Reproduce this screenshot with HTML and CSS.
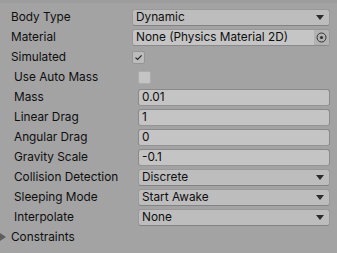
FILE: index.html
```html
<!DOCTYPE html>
<html>
<head>
<meta charset="utf-8">
<link rel="stylesheet" href="styles.css">
</head>
<body>
<div class="inspector">
  <div class="header-strip"></div>
  <div class="rows">
    <div class="row">
      <div class="label">Body Type</div>
      <div class="field dropdown"><span class="value">Dynamic</span><span class="arrow"></span></div>
    </div>
    <div class="row">
      <div class="label">Material</div>
      <div class="field object"><span class="value">None (Physics Material 2D)</span><span class="picker"><svg width="11" height="11" viewBox="0 0 11 11"><circle cx="5.5" cy="5.5" r="4.5" fill="none" stroke="#333" stroke-width="1"/><circle cx="5.5" cy="5.5" r="1.6" fill="#333"/></svg></span></div>
    </div>
    <div class="row">
      <div class="label">Simulated</div>
      <div class="checkwrap"><span class="checkbox"><svg width="11" height="11" viewBox="0 0 11 11"><path d="M2.5 5.6 L4.6 7.4 L8.6 3.4" fill="none" stroke="#222" stroke-width="1.2"/></svg></span></div>
    </div>
    <div class="row indent">
      <div class="label">Use Auto Mass</div>
      <div class="checkwrap"><span class="checkbox disabled"></span></div>
    </div>
    <div class="row indent">
      <div class="label">Mass</div>
      <div class="field text"><span class="value">0.01</span></div>
    </div>
    <div class="row indent">
      <div class="label">Linear Drag</div>
      <div class="field text"><span class="value">1</span></div>
    </div>
    <div class="row indent">
      <div class="label">Angular Drag</div>
      <div class="field text"><span class="value">0</span></div>
    </div>
    <div class="row indent">
      <div class="label">Gravity Scale</div>
      <div class="field text"><span class="value">-0.1</span></div>
    </div>
    <div class="row indent">
      <div class="label">Collision Detection</div>
      <div class="field dropdown"><span class="value">Discrete</span><span class="arrow"></span></div>
    </div>
    <div class="row indent">
      <div class="label">Sleeping Mode</div>
      <div class="field dropdown"><span class="value">Start Awake</span><span class="arrow"></span></div>
    </div>
    <div class="row indent">
      <div class="label">Interpolate</div>
      <div class="field dropdown"><span class="value">None</span><span class="arrow"></span></div>
    </div>
    <div class="row foldout">
      <span class="fold-arrow"></span>
      <div class="label">Constraints</div>
    </div>
  </div>
</div>
</body>
</html>
```
FILE: styles.css
```css
html, body {
  margin: 0;
  padding: 0;
  background: #a3a3a3;
}
body {
  width: 337px;
  height: 253px;
  overflow: hidden;
  font-family: Inter, "Noto Sans", sans-serif;
  font-size: 11.8px;
  color: #0e0e0e;
}
.inspector {
  display: flex;
  flex-direction: column;
}
.header-strip {
  height: 3px;
  background: #9d9d9d;
}
.rows {
  display: flex;
  flex-direction: column;
  gap: 2px;
  padding-top: 5px;
  padding-right: 7px;
}
.row {
  display: flex;
  align-items: center;
  height: 18px;
}
.label {
  width: 121px;
  padding-left: 11px;
  line-height: 18px;
  white-space: nowrap;
  flex: none;
}
.indent .label {
  padding-left: 14px;
}
.indent .field,
.indent .checkwrap {
  margin-left: 3px;
}
.field {
  flex: 1;
  height: 17px;
  box-sizing: border-box;
  border-radius: 3px;
  display: flex;
  align-items: center;
  overflow: hidden;
}
.value {
  padding-left: 3px;
  line-height: 16px;
  white-space: nowrap;
  flex: 1;
}
.dropdown {
  background: #bdbdbd;
  border: 1px solid #999;
  border-bottom-color: #838383;
}
.arrow {
  width: 0;
  height: 0;
  border-left: 4px solid transparent;
  border-right: 4px solid transparent;
  border-top: 5px solid #2c2c2c;
  margin-right: 5px;
}
.object {
  background: #c5c5c5;
  border: 1px solid #979797;
  border-bottom-color: #8a8a8a;
}
.picker {
  width: 15px;
  height: 100%;
  background: #b3b3b3;
  display: flex;
  align-items: center;
  justify-content: center;
}
.picker svg {
  display: block;
}
.text {
  background: #c4c4c4;
  border: 1px solid #8a8a8a;
  border-bottom-color: #949494;
}
.checkwrap {
  flex: 1;
  display: flex;
  align-items: center;
}
.checkbox {
  width: 13px;
  height: 13px;
  box-sizing: border-box;
  border: 1px solid #959595;
  border-radius: 2px;
  background: #bcbcbc;
  display: flex;
  align-items: center;
  justify-content: center;
}
.checkbox svg {
  display: block;
}
.checkbox.disabled {
  background: #c4c4c4;
  border-color: #acacac;
}
.foldout {
  position: relative;
}
.foldout .label {
  padding-left: 11px;
}
.fold-arrow {
  position: absolute;
  left: 0;
  top: 5px;
  width: 0;
  height: 0;
  border-top: 4px solid transparent;
  border-bottom: 4px solid transparent;
  border-left: 6px solid #5e5e5e;
}
```
